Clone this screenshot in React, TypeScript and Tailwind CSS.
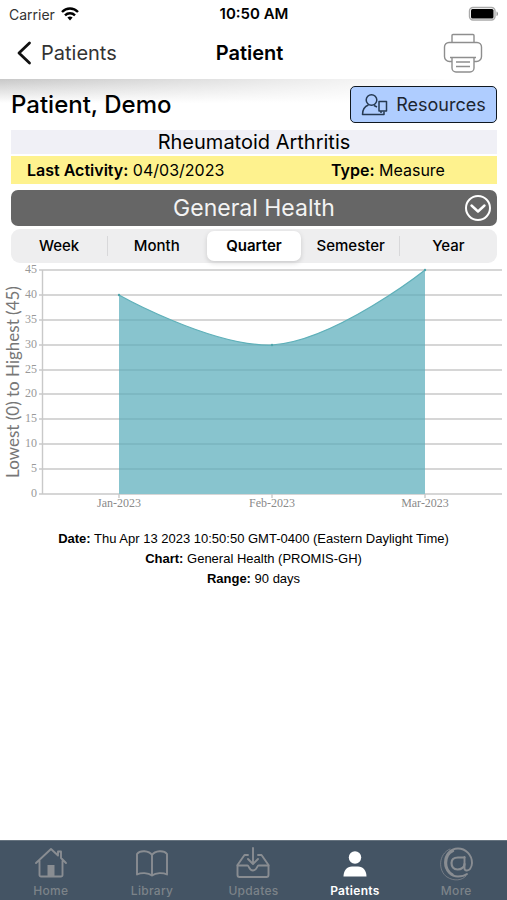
import React, { useState } from "react";

const RANGES = ["Week", "Month", "Quarter", "Semester", "Year"];
const TICKS = [45, 40, 35, 30, 25, 20, 15, 10, 5, 0];
const MONTHS = [
  { label: "Jan-2023", x: 119 },
  { label: "Feb-2023", x: 272 },
  { label: "Mar-2023", x: 425 },
];
const CURVE = "M119 31C119 31 212 83 272 81C335 77 425 6 425 6";

function yFor(value: number) {
  return Math.round(230 - (value * 224) / 45);
}

function StatusBar() {
  return (
    <div className="grid h-7 grid-cols-3 items-center pl-[9px] pr-2 text-[14px]">
      <div className="flex items-center gap-[6px] text-[#333]">
        <span>Carrier</span>
        <svg width="18" height="14" viewBox="0 0 18 14" fill="none" stroke="#000" strokeWidth="2.4" aria-hidden="true">
          <path d="M1 5C5.5.4 12.500.4 17 5" />
          <path d="M4 8.300C6.800 5.500 11.200 5.500 14 8.300" />
          <path d="M6.400 10.600C8 9.100 10 9.100 11.600 10.600L9 13.400Z" fill="#000" stroke="none" />
        </svg>
      </div>
      <div className="text-center text-[15px] font-semibold">10:50 AM</div>
      <svg className="justify-self-end" width="31" height="16" viewBox="0 0 31 16" aria-hidden="true">
        <rect x="1.500" y="1.500" width="25.500" height="12.500" rx="3.500" fill="#fff" stroke="#aaa" strokeWidth="1.400" />
        <rect x="3" y="3" width="22.500" height="9.500" rx="1.500" fill="#000" />
        <path d="M28.500 5.500c2 .6 2 4 0 4.600z" fill="#999" />
      </svg>
    </div>
  );
}

function Header() {
  return (
    <header className="grid h-[51px] grid-cols-[1fr_auto_1fr] items-center pb-[2px] pl-4 pr-6">
      <a href="#patients" className="flex items-center gap-[9px] text-[20px] text-[#333]">
        <svg width="16" height="24" viewBox="0 0 16 24" fill="none" stroke="#111" strokeWidth="2.800" strokeLinecap="round" strokeLinejoin="round" aria-hidden="true">
          <path d="M13.500 2L3 12l10.500 10" />
        </svg>
        Patients
      </a>
      <h1 className="text-[20px] font-semibold">Patient</h1>
      <button type="button" aria-label="Print" className="justify-self-end">
        <svg width="40" height="40" viewBox="0 0 40 40" fill="none" stroke="#8e8e8e" strokeWidth="1.400" aria-hidden="true">
          <path d="M9 9.500V2.500a1 1 0 0 1 1-1h20a1 1 0 0 1 1 1v7" />
          <path d="M9 28.500H6.500a5 5 0 0 1-5-5V14a4.500 4.500 0 0 1 4.500-4.500h28A4.500 4.500 0 0 1 38.500 14v9.500a5 5 0 0 1-5 5H31" />
          <path d="M7 24.500h26M9 24.500V35a4 4 0 0 0 4 4h14a4 4 0 0 0 4-4V24.500" />
          <path d="M13 29h14M13 33.500h14" />
        </svg>
      </button>
    </header>
  );
}

function HealthChart() {
  return (
    <svg viewBox="0 0 507 250" className="mt-px block w-full overflow-visible" role="img" aria-label="General Health by month">
      <g stroke="#c9c9c9" strokeWidth="1.400">
        {TICKS.map((t) => (
          <line key={t} x1="39" x2="502" y1={yFor(t)} y2={yFor(t)} />
        ))}
        <line x1="42.500" x2="42.500" y1="6" y2="230" />
        {MONTHS.map((m) => (
          <line key={m.label} x1={m.x} x2={m.x} y1="230" y2="234" />
        ))}
      </g>
      <path d={CURVE + "V230H119Z"} fill="#88c4ce" />
      <clipPath id="area">
        <path d={CURVE + "V230H119Z"} />
      </clipPath>
      <g clipPath="url(#area)" stroke="#72acb5" strokeWidth="1.200">
        {TICKS.slice(1, 9).map((t) => (
          <line key={t} x1="119" x2="425" y1={yFor(t)} y2={yFor(t)} />
        ))}
      </g>
      <path d={CURVE} fill="none" stroke="#5fb0b9" strokeWidth="1.200" />
      <g fill="#4fa5ac">
        <circle cx="119" cy="31" r="1.200" />
        <circle cx="272" cy="81" r="1.200" />
        <circle cx="425" cy="6" r="1.200" />
      </g>
      <g fill="#999" fontFamily="'Liberation Serif', serif" fontSize="12" textAnchor="end">
        {TICKS.map((t) => (
          <text key={t} x="37" y={yFor(t) + 3}>{t}</text>
        ))}
      </g>
      <g fill="#8a8a8a" fontFamily="'Liberation Serif', serif" fontSize="12" textAnchor="middle">
        {MONTHS.map((m) => (
          <text key={m.label} x={m.x} y="243">{m.label}</text>
        ))}
      </g>
      <text transform="translate(19 118) rotate(-90)" textAnchor="middle" fill="#777" fontFamily="Lato, sans-serif" fontSize="17">
        Lowest (0) to Highest (45)
      </text>
    </svg>
  );
}

const TABS = [
  {
    label: "Home",
    icon: (
      <>
        <path d="M2 16L17 2l7 6.500V4.500h3V11l5 5M5.500 13.500V28a1.500 1.500 0 0 0 1.500 1.500h20a1.500 1.500 0 0 0 1.500-1.500V13.500" />
        <path d="M13.500 18h7v11.500h-7z" fill="#898d92" stroke="none" />
      </>
    ),
  },
  {
    label: "Library",
    icon: (
      <path d="M17 8C14 3.500 5 3 2 7v20.500c4-2 11-2 15 1 4-3 11-3 15-1V7C29 3 20 3.500 17 8zv20" />
    ),
  },
  {
    label: "Updates",
    icon: (
      <>
        <path d="M12 8H8.500L1.500 18v10a2 2 0 0 0 2 2h27a2 2 0 0 0 2-2V18L25.500 8H22" />
        <path d="M1.500 18.500H11.500C13 18.500 13 23.500 17 23.500S21 18.500 22.500 18.500h10" />
        <path d="M17 1v15.500M12 12l5 5 5-5" />
      </>
    ),
  },
  {
    label: "Patients",
    icon: (
      <g fill="#fff" stroke="none">
        <circle cx="17" cy="10.500" r="6.200" />
        <path d="M5.500 29.500c0-6 3.500-10 8.500-10h6c5 0 8.500 4 8.500 10z" />
      </g>
    ),
  },
  {
    label: "More",
    icon: (
      <>
        <path d="M25.500 10v11.500c0 2.500 4 2.500 5.500.5C32.500 20 33 18 33 16 33 7.500 26.500 1.500 19 1.500 11 1.500 6 8 6 15.500c0 8 6 14 13 14 4 0 7-1 9-2.500" />
        <path d="M14 4C8.500 6.500 7 11 7 16s3 9.500 6.500 11.500" strokeWidth="2.400" />
        <path d="M25.500 10.500H19c-4 0-6.500 2-6.500 5.500s2 6.500 6 6.500c4 0 7-2.500 7-5.500" strokeWidth="2.200" />
        <path d="M11 2C-1 7-1 24 8 30c7 4.500 15 3.500 19-1" strokeWidth=".7" />
      </>
    ),
  },
];

function TabBar() {
  return (
    <nav className="grid h-[60px] grid-cols-5 border-t border-[#66737f] bg-[#445464]">
      {TABS.map((tab) => (
        <a
          key={tab.label}
          href={"#" + tab.label.toLowerCase()}
          className={
            "flex flex-col items-center gap-[2px] pt-[6px] text-[12px] leading-4 tracking-wide " +
            (tab.label === "Patients" ? "font-semibold text-white" : "font-medium text-[#7c8389]")
          }
        >
          <svg width="34" height="34" viewBox="0 0 34 34" fill="none" stroke="#898d92" strokeWidth="1.900" strokeLinejoin="round" strokeLinecap="round" aria-hidden="true">
            {tab.icon}
          </svg>
          {tab.label}
        </a>
      ))}
    </nav>
  );
}

export default function App() {
  const [range, setRange] = useState("Quarter");
  return (
    <div className="flex min-h-screen flex-col bg-white font-[Inter,sans-serif] text-black">
      <StatusBar />
      <Header />
      <main className="flex-1 bg-[linear-gradient(to_right,transparent,white_90%),linear-gradient(to_bottom,#c8c8c8,white_24px)]">
        <div className="flex h-[51px] items-center justify-between pl-[11px] pr-[10px]">
          <h2 className="text-[24px] font-medium">Patient, Demo</h2>
          <button type="button" className="flex h-[37px] w-[147px] items-center justify-center gap-[8px] rounded-[5px] border border-[#101820] bg-[#afcdff] text-[18px] text-[#1c2530]">
            <svg width="27" height="24" viewBox="0 0 27 24" fill="none" stroke="#263a52" strokeWidth="1.500" strokeLinejoin="round" aria-hidden="true">
              <circle cx="10.500" cy="7" r="5.300" />
              <path d="M7.500 12C3.500 13.500 1.500 17 1.500 21.500H23V18.500M13 12.500l3 1.500" />
              <path d="M18 8.500h7.500v9.500H18z" />
              <path d="M20 18v2" />
            </svg>
            Resources
          </button>
        </div>
        <div className="pl-[11px] pr-[10px]">
          <div className="mb-[2px] h-6 bg-[#f0f0f6] text-center text-[20px] leading-6">Rheumatoid Arthritis</div>
          <div className="grid h-7 grid-cols-2 items-center bg-[#fef28e] text-[16px]">
            <p className="pl-4"><b className="font-semibold">Last Activity:</b> 04/03/2023</p>
            <p className="pl-[77px]"><b className="font-semibold">Type:</b> Measure</p>
          </div>
          <button type="button" aria-expanded="false" className="mt-[6px] grid h-9 w-full grid-cols-[1fr_auto_1fr] items-center rounded-[7px] bg-[#666] px-[5px] text-[23px] text-[#f3f3f3]">
            <span className="col-start-2">General Health</span>
            <svg className="justify-self-end" width="28" height="28" viewBox="0 0 28 28" fill="none" stroke="#fff" strokeWidth="2" strokeLinecap="round" strokeLinejoin="round" aria-hidden="true">
              <circle cx="14" cy="14" r="12" />
              <path d="M7.500 11.500l6.500 6 6.500-6" strokeWidth="2.400" />
            </svg>
          </button>
          <div role="group" aria-label="Range" className="mt-[3px] grid h-[34px] grid-cols-5 items-center rounded-[9px] bg-[#eeeeef] text-[15px]">
            {RANGES.map((r, i) => (
              <button
                key={r}
                type="button"
                aria-pressed={r === range}
                onClick={() => setRange(r)}
                className={
                  r === range
                    ? "mx-[2px] h-[30px] rounded-[7px] bg-white font-semibold shadow-[0_2px_5px_rgba(0,0,0,0.15)]"
                    : "h-5 font-medium leading-5 " + (i === 0 || i === 3 ? "border-r border-[#d8d8da]" : "")
                }
              >
                {r}
              </button>
            ))}
          </div>
        </div>
        <HealthChart />
        <div className="mt-[15px] text-center font-['Liberation_Sans',Arial,sans-serif] text-[13px] leading-5">
          <p><b>Date:</b> Thu Apr 13 2023 10:50:50 GMT-0400 (Eastern Daylight Time)</p>
          <p><b>Chart:</b> General Health (PROMIS-GH)</p>
          <p><b>Range:</b> 90 days</p>
        </div>
      </main>
      <TabBar />
    </div>
  );
}
